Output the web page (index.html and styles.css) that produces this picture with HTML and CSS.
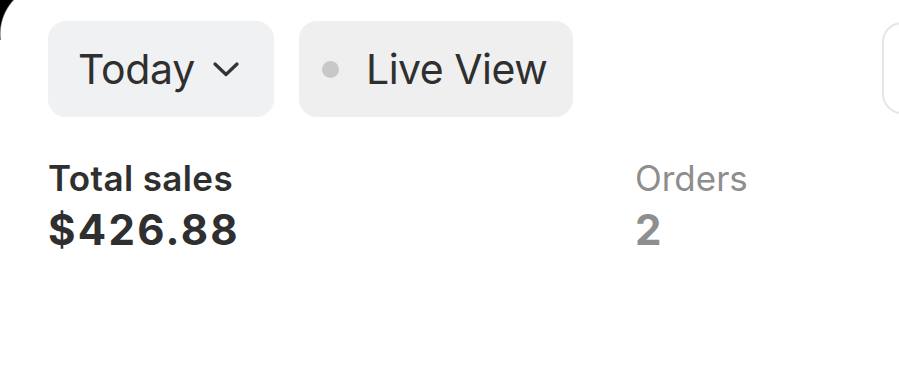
FILE: index.html
```html
<!DOCTYPE html>
<html lang="en">
<head>
<meta charset="utf-8">
<title>Sales</title>
<link rel="stylesheet" href="styles.css">
</head>
<body>
<div class="screen">
  <div class="corner"></div>
  <div class="toolbar">
    <button class="pill pill-today">
      <span class="pill-text">Today</span>
      <svg class="chevron" width="26" height="16" viewBox="0 0 26 16"><path d="M2 3 L13 13.5 L24 3" fill="none" stroke="#333" stroke-width="3.2" stroke-linecap="round" stroke-linejoin="round"/></svg>
    </button>
    <button class="pill pill-live">
      <span class="dot"></span>
      <span class="pill-text">Live View</span>
    </button>
    <button class="pill pill-outline"></button>
  </div>
  <div class="stats">
    <div class="stat">
      <div class="stat-label">Total sales</div>
      <div class="stat-value">$426.88</div>
    </div>
    <div class="stat stat-muted">
      <div class="stat-label">Orders</div>
      <div class="stat-value">2</div>
    </div>
  </div>
</div>
</body>
</html>
```

FILE: styles.css
```css
html, body {
  margin: 0;
  padding: 0;
  background: #fff;
  overflow: hidden;
}
body {
  width: 899px;
  height: 373px;
  font-family: Inter, "Noto Sans", sans-serif;
  color: #2f2f2f;
}
.screen {
  position: relative;
  height: 373px;
  padding: 21px 0 0 48px;
  box-sizing: border-box;
  overflow: hidden;
}
.corner {
  position: absolute;
  top: 0;
  left: 0;
  width: 40px;
  height: 40px;
  background: radial-gradient(circle 50px at 50px 34px, transparent 49px, #000 50.5px);
}
.toolbar {
  display: flex;
  gap: 25px;
  white-space: nowrap;
}
.pill {
  flex: none;
  height: 96px;
  border: none;
  border-radius: 18px;
  display: flex;
  align-items: center;
  font-family: inherit;
  color: #2f2f2f;
  padding: 0;
  margin: 0;
  box-sizing: border-box;
}
.pill-text {
  font-size: 41px;
  font-weight: 400;
  letter-spacing: -0.3px;
}
.pill-today {
  width: 226px;
  background: #f0f1f3;
  padding-left: 30px;
  gap: 18px;
}
.chevron {
  display: block;
}
.pill-live {
  width: 274px;
  background: #efefef;
  padding-left: 23px;
  gap: 27px;
}
.pill-live .pill-text {
  letter-spacing: -0.5px;
}
.dot {
  width: 17px;
  height: 17px;
  border-radius: 50%;
  background: #c8c8c8;
  flex: none;
}
.pill-outline {
  width: 120px;
  height: 92px;
  margin-top: 1px;
  margin-left: 284px;
  background: #fff;
  border: 2px solid #e6e6e6;
  border-radius: 20px;
}
.stats {
  display: flex;
  margin-top: 40px;
}
.stat {
  width: 587px;
  flex: none;
}
.stat-label {
  font-size: 35px;
  font-weight: 600;
  line-height: 42px;
  letter-spacing: 0.4px;
}
.stat-value {
  margin-top: 6px;
  font-size: 42px;
  font-weight: 700;
  line-height: 50px;
  letter-spacing: 2.3px;
}
.stat-muted {
  color: #8e8e8e;
}
.stat-muted .stat-label {
  font-weight: 400;
  letter-spacing: 0;
}
```
